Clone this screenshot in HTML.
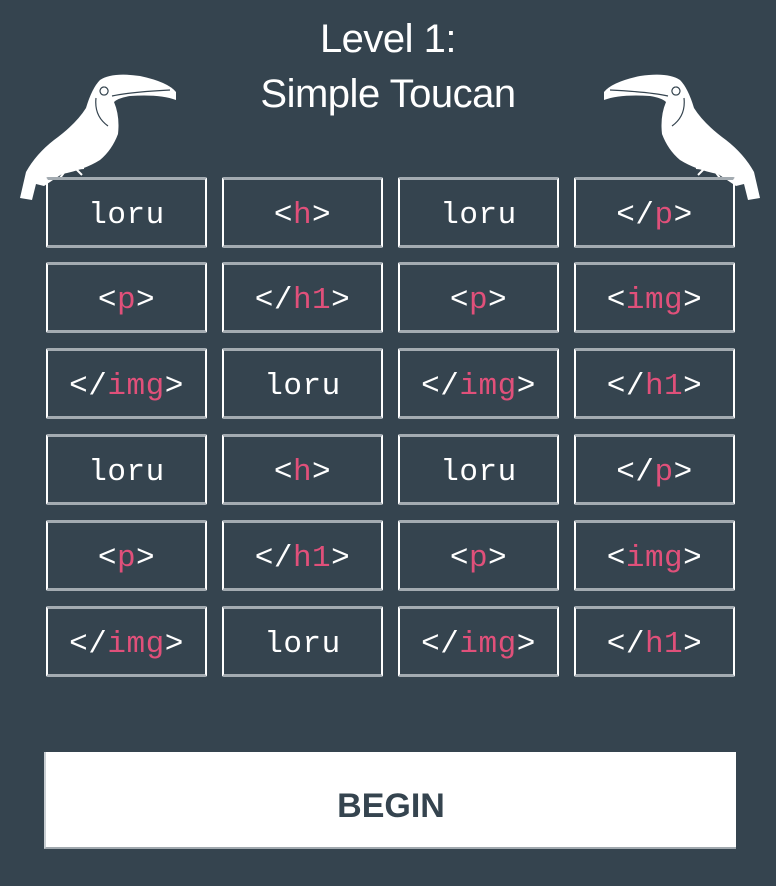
<!DOCTYPE html>
<html><head><meta charset="utf-8"><style>
html,body{margin:0;padding:0}
body{width:776px;height:886px;background:#35444f;position:relative;overflow:hidden;font-family:"Liberation Sans",sans-serif}
.t{position:absolute;left:0;width:776px;text-align:center;color:#fff;font-size:40px;line-height:55px;letter-spacing:-0.5px}
.c{position:absolute;width:157px;height:65px;border-left:2px solid #fff;border-right:2px solid #fff;border-top:3px solid #a3abb1;border-bottom:3px solid #a3abb1;border-radius:2px;box-sizing:content-box;color:#fff;font-family:"Liberation Mono",monospace;font-size:31px;line-height:72px;letter-spacing:0.5px;text-align:center}
.c b{color:#e0507a;font-weight:normal}
.btn{position:absolute;left:44px;top:752px;width:690px;height:95px;background:#fff;border-left:2px solid #c8ced2;border-bottom:2px solid #a0a8ae;color:#35444f;font-weight:bold;font-size:34px;line-height:108px;text-align:center}
svg{position:absolute}
</style></head><body>
<div class="t" style="top:12px">Level 1:</div>
<div class="t" style="top:67px">Simple Toucan</div>
<svg style="left:0;top:60px" width="200" height="150" viewBox="0 0 200 150">
<path fill="#fff" d="M100 20 Q112 12 140 16 Q168 22 176 32 L176 40 Q160 34 130 36 Q118 38 114 42 Q120 56 118 74 Q112 90 100 100 Q84 110 62 114 L44 126 L36 124 L32 140 L20 138 L26 112 Q36 94 54 80 Q76 64 86 48 Q92 28 100 20 Z"/>
<path fill="none" stroke="#35444f" stroke-width="1.2" d="M104 27 a4 4 0 1 0 0.1 0 M112 36 Q130 32 170 30 M96 38 Q94 56 108 66"/>
<path stroke="#fff" stroke-width="2" d="M58 110 L84 108 M66 110 L60 118 M76 109 L82 115"/>
</svg>
<svg style="left:580px;top:60px" width="200" height="150" viewBox="0 0 200 150">
<g transform="translate(200,0) scale(-1,1)">
<path fill="#fff" d="M100 20 Q112 12 140 16 Q168 22 176 32 L176 40 Q160 34 130 36 Q118 38 114 42 Q120 56 118 74 Q112 90 100 100 Q84 110 62 114 L44 126 L36 124 L32 140 L20 138 L26 112 Q36 94 54 80 Q76 64 86 48 Q92 28 100 20 Z"/>
<path fill="none" stroke="#35444f" stroke-width="1.2" d="M104 27 a4 4 0 1 0 0.1 0 M112 36 Q130 32 170 30 M96 38 Q94 56 108 66"/>
<path stroke="#fff" stroke-width="2" d="M58 110 L84 108 M66 110 L60 118 M76 109 L82 115"/>
</g>
</svg>
<div class="c" style="left:46px;top:177px">loru</div>
<div class="c" style="left:222px;top:177px">&lt;<b>h</b>&gt;</div>
<div class="c" style="left:398px;top:177px">loru</div>
<div class="c" style="left:574px;top:177px">&lt;/<b>p</b>&gt;</div>
<div class="c" style="left:46px;top:262px">&lt;<b>p</b>&gt;</div>
<div class="c" style="left:222px;top:262px">&lt;/<b>h1</b>&gt;</div>
<div class="c" style="left:398px;top:262px">&lt;<b>p</b>&gt;</div>
<div class="c" style="left:574px;top:262px">&lt;<b>img</b>&gt;</div>
<div class="c" style="left:46px;top:348px">&lt;/<b>img</b>&gt;</div>
<div class="c" style="left:222px;top:348px">loru</div>
<div class="c" style="left:398px;top:348px">&lt;/<b>img</b>&gt;</div>
<div class="c" style="left:574px;top:348px">&lt;/<b>h1</b>&gt;</div>
<div class="c" style="left:46px;top:434px">loru</div>
<div class="c" style="left:222px;top:434px">&lt;<b>h</b>&gt;</div>
<div class="c" style="left:398px;top:434px">loru</div>
<div class="c" style="left:574px;top:434px">&lt;/<b>p</b>&gt;</div>
<div class="c" style="left:46px;top:520px">&lt;<b>p</b>&gt;</div>
<div class="c" style="left:222px;top:520px">&lt;/<b>h1</b>&gt;</div>
<div class="c" style="left:398px;top:520px">&lt;<b>p</b>&gt;</div>
<div class="c" style="left:574px;top:520px">&lt;<b>img</b>&gt;</div>
<div class="c" style="left:46px;top:606px">&lt;/<b>img</b>&gt;</div>
<div class="c" style="left:222px;top:606px">loru</div>
<div class="c" style="left:398px;top:606px">&lt;/<b>img</b>&gt;</div>
<div class="c" style="left:574px;top:606px">&lt;/<b>h1</b>&gt;</div>
<div class="btn">BEGIN</div>
</body></html>
